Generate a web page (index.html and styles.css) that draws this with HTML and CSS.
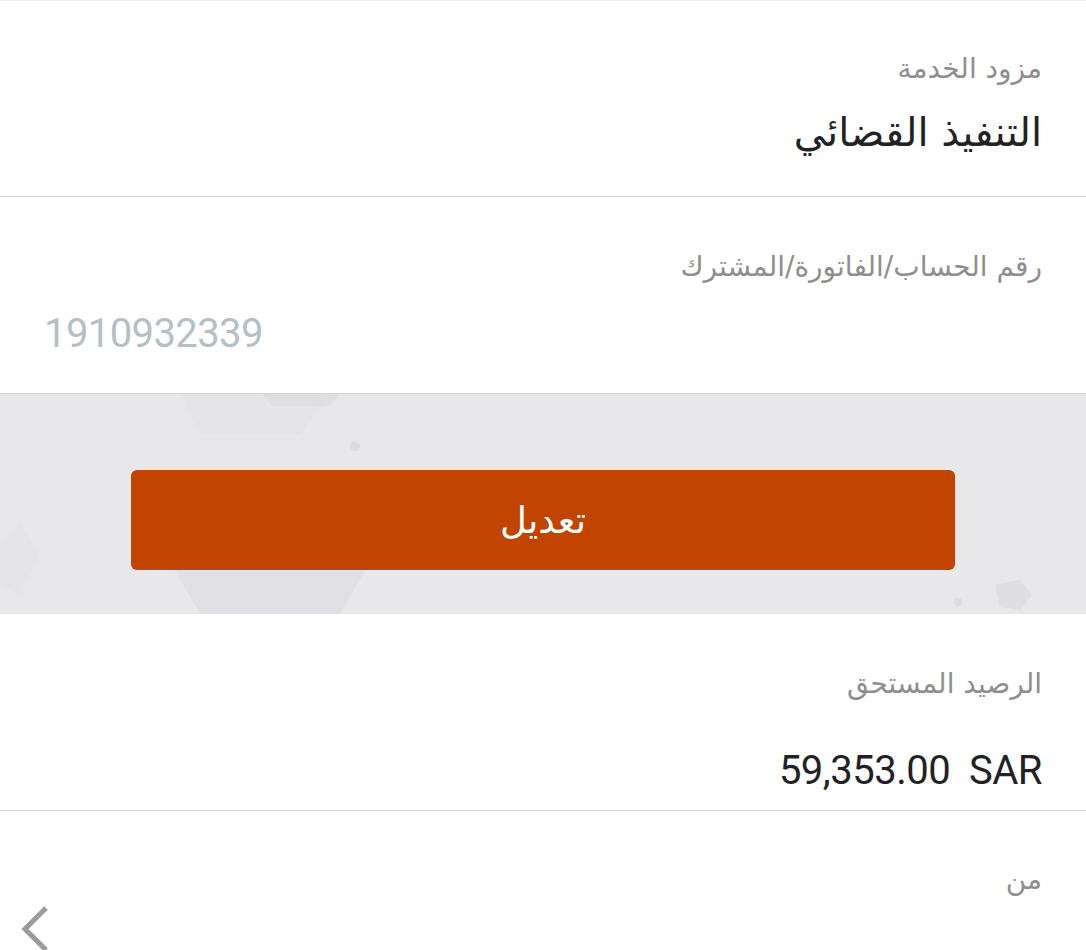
FILE: index.html
```html
<!DOCTYPE html>
<html lang="ar" dir="rtl">
<head>
<meta charset="utf-8">
<title>تفاصيل الفاتورة</title>
<link rel="stylesheet" href="styles.css">
</head>
<body>
<main class="screen">
  <section class="field field-provider">
    <div class="label">مزود الخدمة</div>
    <div class="value value-ar">التنفيذ القضائي</div>
  </section>
  <section class="field field-account">
    <div class="label">رقم الحساب/الفاتورة/المشترك</div>
    <div class="account-number" dir="ltr">1910932339</div>
  </section>
  <section class="band">
    <svg class="band-bg" viewBox="0 0 1086 219" preserveAspectRatio="none" aria-hidden="true">
      <polygon points="180,0 330,0 300,40 200,40" fill="#e1e1e4" opacity="0.5"/>
      <polygon points="262,0 340,0 330,12 272,12" fill="#dadade" opacity="0.6"/>
      <polygon points="160,150 380,150 340,219 200,219" fill="#dedee2" opacity="0.7"/>
      <circle cx="355" cy="52" r="5" fill="#dcdcdf"/>
      <polygon points="995,190 1020,185 1032,200 1020,215 1000,212" fill="#dfdfe2"/>
      <circle cx="958" cy="207" r="4" fill="#dddde0"/>
      <polygon points="0,150 20,130 40,160 20,200 0,190" fill="#e3e3e6" opacity="0.6"/>
    </svg>
    <button class="edit-btn" type="button">تعديل</button>
  </section>
  <section class="field field-balance">
    <div class="label">الرصيد المستحق</div>
    <div class="amount" dir="ltr">59,353.00&nbsp;&nbsp;SAR</div>
  </section>
  <section class="field field-from">
    <div class="label">من</div>
    <svg class="chevron" viewBox="0 0 30 46" aria-hidden="true">
      <polyline points="26,2 5,23 26,44" fill="none" stroke="#9b9b9b" stroke-width="5"/>
    </svg>
  </section>
</main>
</body>
</html>
```

FILE: styles.css
```css
html, body {
  margin: 0;
  padding: 0;
  background: #ffffff;
}

body {
  font-family: "DejaVu Sans", "Noto Sans Arabic", sans-serif;
  color: #1f2326;
}

.screen {
  width: 1086px;
  height: 950px;
  overflow: hidden;
  border-top: 1px solid #ececec;
  box-sizing: border-box;
}

.field {
  position: relative;
  padding: 0 44px;
  border-bottom: 1px solid #d4d4d4;
  box-sizing: border-box;
}

.label {
  font-size: 28px;
  line-height: 36px;
  color: #8e8e8e;
}

.field-provider {
  height: 196px;
  padding-top: 50px;
}

.value-ar {
  margin-top: 20px;
  font-size: 40px;
  line-height: 50px;
  color: #1f2326;
}

.field-account {
  height: 197px;
  padding-top: 52px;
}

.account-number {
  text-align: left;
  margin-top: 25px;
  font-family: Roboto, "Liberation Sans", sans-serif;
  font-size: 40px;
  line-height: 48px;
  letter-spacing: -0.6px;
  color: #b3c0c6;
}

.band {
  position: relative;
  height: 220px;
  background: #e8e8ea;
  display: flex;
  justify-content: center;
  padding-top: 76px;
  box-sizing: border-box;
  overflow: hidden;
}

.band-bg {
  position: absolute;
  inset: 0;
  width: 100%;
  height: 100%;
}

.edit-btn {
  position: relative;
  width: 824px;
  height: 100px;
  border: none;
  border-radius: 6px;
  background: #c14500;
  color: #ffffff;
  font-family: "DejaVu Sans", "Noto Sans Arabic", sans-serif;
  font-size: 37px;
  padding: 0;
}

.field-balance {
  height: 197px;
  padding-top: 52px;
}

.amount {
  text-align: right;
  margin-top: 45px;
  font-family: Roboto, "Liberation Sans", sans-serif;
  font-size: 40px;
  line-height: 48px;
  letter-spacing: -0.5px;
  color: #1f2326;
}

.field-from {
  height: 140px;
  border-bottom: none;
  padding-top: 51px;
}

.chevron {
  position: absolute;
  left: 20px;
  top: 95px;
  width: 30px;
  height: 46px;
}
```
